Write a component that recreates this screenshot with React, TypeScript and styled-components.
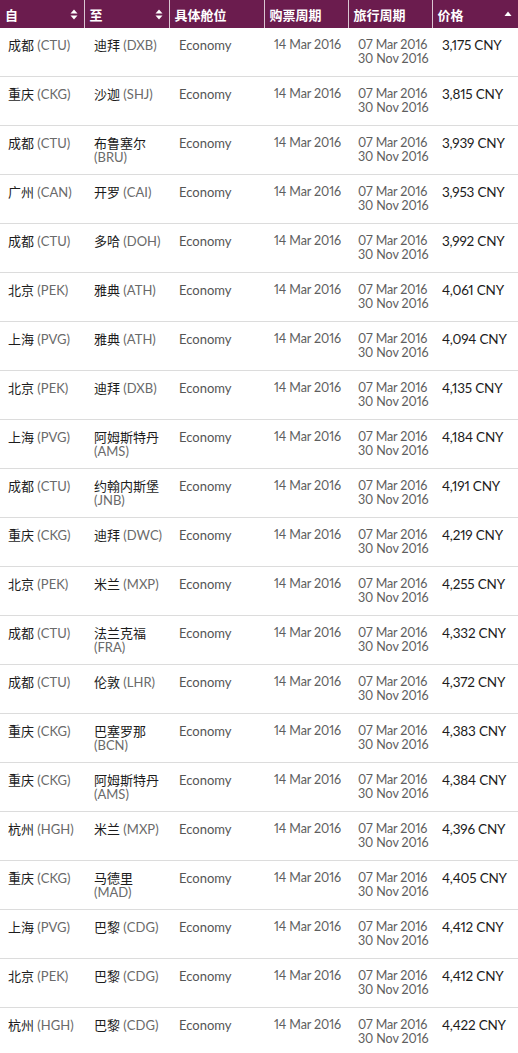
import React from "react";
import styled, { createGlobalStyle } from "styled-components";

const Global = createGlobalStyle`
  html, body { margin: 0; padding: 0; background: #fff; }
  body { font-family: Lato, "Noto Sans CJK SC", sans-serif; font-variant-numeric: proportional-nums; }
`;

type Row = { fc: string; fcode: string; tc: string; tcode: string; wrap?: boolean; price: string };

const rows: Row[] = [
  { fc: "成都", fcode: "CTU", tc: "迪拜", tcode: "DXB", price: "3,175" },
  { fc: "重庆", fcode: "CKG", tc: "沙迦", tcode: "SHJ", price: "3,815" },
  { fc: "成都", fcode: "CTU", tc: "布鲁塞尔", tcode: "BRU", wrap: true, price: "3,939" },
  { fc: "广州", fcode: "CAN", tc: "开罗", tcode: "CAI", price: "3,953" },
  { fc: "成都", fcode: "CTU", tc: "多哈", tcode: "DOH", price: "3,992" },
  { fc: "北京", fcode: "PEK", tc: "雅典", tcode: "ATH", price: "4,061" },
  { fc: "上海", fcode: "PVG", tc: "雅典", tcode: "ATH", price: "4,094" },
  { fc: "北京", fcode: "PEK", tc: "迪拜", tcode: "DXB", price: "4,135" },
  { fc: "上海", fcode: "PVG", tc: "阿姆斯特丹", tcode: "AMS", wrap: true, price: "4,184" },
  { fc: "成都", fcode: "CTU", tc: "约翰内斯堡", tcode: "JNB", wrap: true, price: "4,191" },
  { fc: "重庆", fcode: "CKG", tc: "迪拜", tcode: "DWC", price: "4,219" },
  { fc: "北京", fcode: "PEK", tc: "米兰", tcode: "MXP", price: "4,255" },
  { fc: "成都", fcode: "CTU", tc: "法兰克福", tcode: "FRA", wrap: true, price: "4,332" },
  { fc: "成都", fcode: "CTU", tc: "伦敦", tcode: "LHR", price: "4,372" },
  { fc: "重庆", fcode: "CKG", tc: "巴塞罗那", tcode: "BCN", wrap: true, price: "4,383" },
  { fc: "重庆", fcode: "CKG", tc: "阿姆斯特丹", tcode: "AMS", wrap: true, price: "4,384" },
  { fc: "杭州", fcode: "HGH", tc: "米兰", tcode: "MXP", price: "4,396" },
  { fc: "重庆", fcode: "CKG", tc: "马德里", tcode: "MAD", wrap: true, price: "4,405" },
  { fc: "上海", fcode: "PVG", tc: "巴黎", tcode: "CDG", price: "4,412" },
  { fc: "北京", fcode: "PEK", tc: "巴黎", tcode: "CDG", price: "4,412" },
  { fc: "杭州", fcode: "HGH", tc: "巴黎", tcode: "CDG", price: "4,422" },
];

const Table = styled.table`
  width: 518px;
  border-collapse: collapse;
  table-layout: fixed;
`;

const Th = styled.th`
  background: #6b1c4e;
  color: #fff;
  height: 28px;
  padding: 0 6px 0 5px;
  text-align: left;
  font-family: "Noto Sans CJK SC", sans-serif;
  font-weight: 700;
  font-size: 13px;
  border-left: 1px solid rgba(255, 255, 255, 0.75);
  &:first-child { border-left: none; }
`;

const HeadInner = styled.div`
  display: flex;
  align-items: center;
  justify-content: space-between;
`;

const Td = styled.td<{ $pl?: number }>`
  vertical-align: top;
  padding: 10px 2px 10px ${(p) => p.$pl ?? 10}px;
  height: 28px;
  font-size: 13px;
  line-height: 14px;
  color: #555;
  white-space: nowrap;
`;

const Tr = styled.tr`
  border-bottom: 1px solid #dcdcdc;
`;

const City = styled.span`
  color: #1c1c1c;
  font-family: "Noto Sans CJK SC", sans-serif;
  font-size: 13px;
  line-height: 14px;
`;

const Code = styled.span<{ $block?: boolean }>`
  color: #6a6a6a;
  display: ${(p) => (p.$block ? "block" : "inline")};
`;

const DateText = styled.span`
  color: #5e5e5e;
  display: block;
  font-size: 12.5px;
  letter-spacing: -0.1px;
`;

const Price = styled.span`
  color: #1c1c1c;
  font-size: 13.5px;
  letter-spacing: -0.2px;
`;

const SortBoth = () => (
  <svg width="8" height="11" viewBox="0 0 8 11">
    <path d="M4 0.5 L7.5 4.5 H0.5 Z M4 10.5 L0.5 6.5 H7.5 Z" fill="#fff" />
  </svg>
);
const SortUp = () => (
  <svg width="8" height="6" viewBox="0 0 8 6">
    <path d="M4 0.5 L7.5 5 H0.5 Z" fill="#fff" />
  </svg>
);

export default function App() {
  return (
    <>
      <Global />
      <Table>
        <colgroup>
          <col style={{ width: 84 }} />
          <col style={{ width: 85 }} />
          <col style={{ width: 95 }} />
          <col style={{ width: 84 }} />
          <col style={{ width: 84 }} />
          <col style={{ width: 86 }} />
        </colgroup>
        <thead>
          <tr>
            <Th><HeadInner>自<SortBoth /></HeadInner></Th>
            <Th><HeadInner>至<SortBoth /></HeadInner></Th>
            <Th>具体舱位</Th>
            <Th>购票周期</Th>
            <Th>旅行周期</Th>
            <Th><HeadInner>价格<SortUp /></HeadInner></Th>
          </tr>
        </thead>
        <tbody>
          {rows.map((r, i) => (
            <Tr key={i}>
              <Td $pl={8}>
                <City>{r.fc}</City> <Code>({r.fcode})</Code>
              </Td>
              <Td>
                <City>{r.tc}</City> <Code $block={r.wrap}>({r.tcode})</Code>
              </Td>
              <Td>Economy</Td>
              <Td>
                <DateText>14 Mar 2016</DateText>
              </Td>
              <Td>
                <DateText>07 Mar 2016</DateText>
                <DateText>30 Nov 2016</DateText>
              </Td>
              <Td>
                <Price>{r.price} CNY</Price>
              </Td>
            </Tr>
          ))}
        </tbody>
      </Table>
    </>
  );
}
